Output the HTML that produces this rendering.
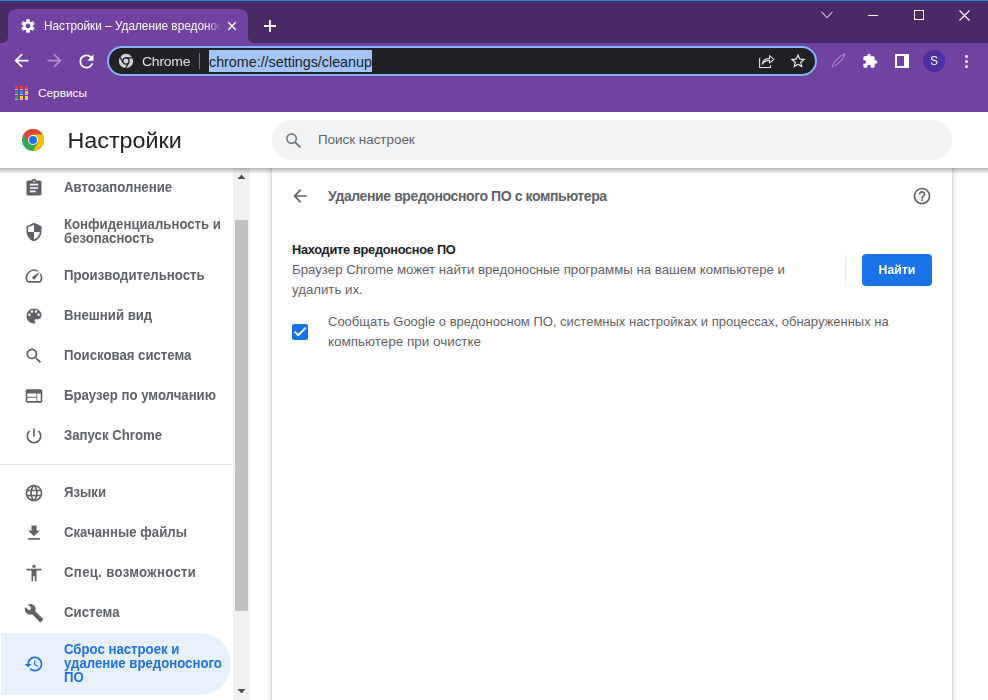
<!DOCTYPE html>
<html><head><meta charset="utf-8"><style>
*{margin:0;padding:0;box-sizing:border-box}
html,body{width:988px;height:700px;overflow:hidden;background:#fff;font-family:"Liberation Sans",sans-serif}
.a,.t,.i{position:absolute}
.t{white-space:nowrap}
</style></head><body>
<div class="a" style="left:0;top:0;width:988px;height:43px;background:#482a67"></div>
<div class="a" style="left:0;top:0;width:988px;height:1px;background:#1a8ae6"></div>
<div class="a" style="left:0;top:1px;width:988px;height:1px;background:#4e2a62"></div>
<div class="a" style="left:8px;top:9px;width:240px;height:34px;background:#7042a1;border-radius:8px 8px 0 0"></div>
<div class="a" style="left:2px;top:37px;width:6px;height:6px;background:#7042a1"><div style="width:6px;height:6px;background:#482a67;border-bottom-right-radius:6px"></div></div>
<div class="a" style="left:248px;top:37px;width:6px;height:6px;background:#7042a1"><div style="width:6px;height:6px;background:#482a67;border-bottom-left-radius:6px"></div></div>
<svg class="i" style="left:18px;top:16px" width="20" height="20" viewBox="0 0 20 20"><path fill="#fff" fill-rule="evenodd" d="M11.91 5.71 L11.67 3.30 L8.33 3.30 L8.09 5.71 L7.24 6.20 L5.04 5.21 L3.37 8.10 L5.33 9.51 L5.33 10.49 L3.37 11.90 L5.04 14.79 L7.24 13.80 L8.09 14.29 L8.33 16.70 L11.67 16.70 L11.91 14.29 L12.76 13.80 L14.96 14.79 L16.63 11.90 L14.67 10.49 L14.67 9.51 L16.63 8.10 L14.96 5.21 L12.76 6.20Z M12.4 10 A2.4 2.4 0 1 0 7.6 10 A2.4 2.4 0 1 0 12.4 10Z"/></svg>
<div class="t" style="left:44px;top:18.83px;font-size:11.8px;line-height:14.16px;color:#fff;font-weight:normal;width:177px;overflow:hidden;-webkit-mask-image:linear-gradient(90deg,#000 163px,transparent 177px);transform:scaleY(1.1);transform-origin:0 11.17px">Настройки – Удаление вредоносного ПО</div>
<svg class="i" style="left:227px;top:21px" width="10" height="10" viewBox="0 0 10 10"><path d="M1.3 1.3L8.7 8.7M8.7 1.3L1.3 8.7" stroke="#fff" stroke-width="1.4"/></svg>
<svg class="i" style="left:263px;top:19px" width="14" height="14" viewBox="0 0 14 14"><path d="M7 1V13M1 7H13" stroke="#fff" stroke-width="1.8"/></svg>
<svg class="i" style="left:821px;top:11px" width="12" height="8" viewBox="0 0 12 8"><path d="M0.5 0.8L6 6.8L11.5 0.8" fill="none" stroke="#fff" stroke-width="1"/></svg>
<div class="a" style="left:868px;top:15px;width:10px;height:1px;background:#fff"></div>
<div class="a" style="left:914px;top:10px;width:10px;height:10px;border:1px solid #fff"></div>
<svg class="i" style="left:959px;top:10px" width="11" height="11" viewBox="0 0 11 11"><path d="M0.5 0.5L10.5 10.5M10.5 0.5L0.5 10.5" stroke="#fff" stroke-width="1.1"/></svg>
<div class="a" style="left:0;top:43px;width:988px;height:69px;background:#7042a1"></div>
<svg class="i" style="left:11px;top:50px;" width="21" height="21" viewBox="0 0 24 24"><path fill="#fff" d="M20 11H7.83l5.59-5.59L12 4l-8 8 8 8 1.41-1.41L7.83 13H20v-2z"/></svg>
<svg class="i" style="left:43.5px;top:50px;transform:scaleX(-1)" width="21" height="21" viewBox="0 0 24 24"><path fill="rgba(255,255,255,.42)" d="M20 11H7.83l5.59-5.59L12 4l-8 8 8 8 1.41-1.41L7.83 13H20v-2z"/></svg>
<svg class="i" style="left:75.5px;top:50.5px" width="21" height="21" viewBox="0 0 24 24"><path fill="#fff" d="M17.65 6.35C16.2 4.9 14.21 4 12 4c-4.42 0-7.99 3.58-7.99 8s3.57 8 7.99 8c3.73 0 6.84-2.55 7.73-6h-2.08c-.82 2.33-3.04 4-5.65 4-3.31 0-6-2.69-6-6s2.69-6 6-6c1.66 0 3.14.69 4.22 1.78L13 11h7V4l-2.35 2.35z"/></svg>
<div class="a" style="left:107px;top:46px;width:710px;height:30px;background:#202124;border:2px solid #8ab4f8;border-radius:15px"></div>
<svg class="i" style="left:116px;top:51px" width="20" height="20" viewBox="0 0 20 20"><circle cx="10" cy="10" r="7.2" fill="#cfcfcf"/><circle cx="10" cy="10" r="3.1" fill="#cfcfcf" stroke="#202124" stroke-width="1.2"/><path d="M10 6.8H17.5M12.77 11.6L9.2 17.8M7.23 11.6L3.6 5.4" stroke="#202124" stroke-width="1.2" fill="none"/></svg>
<div class="t" style="left:142px;top:53.25px;font-size:14px;line-height:16.8px;color:#e3e3e3;font-weight:normal;letter-spacing:-0.25px;transform:scaleY(0.96);transform-origin:0 13.25px">Chrome</div>
<div class="a" style="left:199px;top:53px;width:1px;height:16px;background:#6f7276"></div>
<div class="a" style="left:209px;top:50px;width:163px;height:22px;background:#a3c6f7"></div>
<div class="t" style="left:209px;top:53.97px;font-size:14.3px;line-height:17.16px;color:#202124;font-weight:normal;">chrome://settings/cleanup</div>
<svg class="i" style="left:752px;top:48px" width="26" height="26" viewBox="0 0 26 26"><path d="M7.6 10V19.5H18.5V17.2" fill="none" stroke="#e0e0e0" stroke-width="1.1"/><path d="M10.3 16.2C10.6 12.6 13.2 10.6 17.5 10.6V7.6L21.9 11.4L17.5 15V12.4C14.3 12.3 11.9 13.6 10.3 16.2Z" fill="none" stroke="#e0e0e0" stroke-width="1.05" stroke-linejoin="round"/></svg>
<svg class="i" style="left:789px;top:52px" width="18" height="18" viewBox="0 0 24 24"><path fill="#e8eaed" d="M22 9.24l-7.19-.62L12 2 9.19 8.63 2 9.24l5.46 4.73L5.82 21 12 17.27 18.18 21l-1.63-7.03L22 9.24zM12 15.4l-3.76 2.27 1-4.28-3.32-2.88 4.38-.38L12 6.1l1.71 4.04 4.38.38-3.32 2.88 1 4.28L12 15.4z"/></svg>
<svg class="i" style="left:830px;top:52px" width="16" height="16" viewBox="0 0 16 16"><path d="M2 15C3.6 10 8.2 4.8 14.6 1.8C13.8 7 9 11.8 2 15Z" fill="rgba(160,120,215,.35)" stroke="#b99de0" stroke-width="0.9"/><path d="M2.6 14.4L13.2 3.6" stroke="#4a2d72" stroke-width="0.8"/></svg>
<svg class="i" style="left:861.7px;top:53.3px;" width="16" height="16" viewBox="0 0 24 24"><path fill="#fff" d="M20.5 11H19V7c0-1.1-.9-2-2-2h-4V3.5C13 2.12 11.88 1 10.5 1S8 2.12 8 3.5V5H4c-1.1 0-1.99.9-1.99 2v3.8H3.5c1.49 0 2.7 1.21 2.7 2.7s-1.21 2.7-2.7 2.7H2V20c0 1.1.9 2 2 2h3.8v-1.5c0-1.49 1.21-2.7 2.7-2.7 1.49 0 2.7 1.21 2.7 2.7V22H17c1.1 0 2-.9 2-2v-4h1.5c1.38 0 2.5-1.12 2.5-2.5S21.88 11 20.5 11z"/></svg>
<div class="a" style="left:895px;top:54px;width:14px;height:14px;background:#fff"></div>
<div class="a" style="left:897px;top:56px;width:7px;height:10px;background:#7042a1"></div>
<div class="a" style="left:923px;top:50px;width:22px;height:22px;border-radius:50%;background:#4f2fa3"></div>
<div class="t" style="left:923px;top:54.62px;font-size:11.5px;line-height:13.8px;color:#fff;font-weight:normal;width:22px;text-align:center;transform:scaleY(1.1);transform-origin:0 10.88px">S</div>
<div class="a" style="left:964.9px;top:54.8px;width:3.2px;height:3.2px;border-radius:50%;background:#fff"></div>
<div class="a" style="left:964.9px;top:59.9px;width:3.2px;height:3.2px;border-radius:50%;background:#fff"></div>
<div class="a" style="left:964.9px;top:65.0px;width:3.2px;height:3.2px;border-radius:50%;background:#fff"></div>
<div class="a" style="left:15px;top:86px;width:3px;height:3px;background:#f03a24"></div>
<div class="a" style="left:15px;top:89px;width:3px;height:1px;background:#c4b0e0"></div>
<div class="a" style="left:20px;top:86px;width:3px;height:3px;background:#f03a24"></div>
<div class="a" style="left:20px;top:89px;width:3px;height:1px;background:#c4b0e0"></div>
<div class="a" style="left:25px;top:86px;width:3px;height:3px;background:#f03a24"></div>
<div class="a" style="left:25px;top:89px;width:3px;height:1px;background:#c4b0e0"></div>
<div class="a" style="left:15px;top:91px;width:3px;height:3px;background:#1fa33f"></div>
<div class="a" style="left:15px;top:94px;width:3px;height:1px;background:#c4b0e0"></div>
<div class="a" style="left:20px;top:91px;width:3px;height:3px;background:#2196f3"></div>
<div class="a" style="left:20px;top:94px;width:3px;height:1px;background:#c4b0e0"></div>
<div class="a" style="left:25px;top:91px;width:3px;height:3px;background:#f5c400"></div>
<div class="a" style="left:25px;top:94px;width:3px;height:1px;background:#c4b0e0"></div>
<div class="a" style="left:15px;top:96px;width:3px;height:3px;background:#1fa33f"></div>
<div class="a" style="left:15px;top:99px;width:3px;height:1px;background:#c4b0e0"></div>
<div class="a" style="left:20px;top:96px;width:3px;height:3px;background:#ffd000"></div>
<div class="a" style="left:20px;top:99px;width:3px;height:1px;background:#c4b0e0"></div>
<div class="a" style="left:25px;top:96px;width:3px;height:3px;background:#ffd000"></div>
<div class="a" style="left:25px;top:99px;width:3px;height:1px;background:#c4b0e0"></div>
<div class="t" style="left:38px;top:85.83px;font-size:11.8px;line-height:14.16px;color:#fff;font-weight:normal;">Сервисы</div>
<div class="a" style="left:0;top:112px;width:988px;height:56px;background:#fff"></div>
<svg class="i" style="left:21px;top:128px" width="24" height="24" viewBox="0 0 48 48">
<circle cx="24" cy="24" r="22" fill="#34a853"/>
<path d="M24 2A22 22 0 0 1 43.05 13H24z" fill="#ea4335"/>
<path d="M4.95 13A22 22 0 0 1 24 2V13z" fill="#ea4335"/>
<path d="M24 13H43.05A22 22 0 0 1 24 46L33.53 29.5z" fill="#fbbc04"/>
<path d="M4.95 13L14.47 29.5L24 13z" fill="#ea4335"/>
<circle cx="24" cy="24" r="10" fill="#fff"/><circle cx="24" cy="24" r="8" fill="#1a73e8"/></svg>
<div class="t" style="left:67.5px;top:126.75px;font-size:23.3px;line-height:27.96px;color:#202124;font-weight:normal;;transform:scaleY(0.935);transform-origin:0 22.05px">Настройки</div>
<div class="a" style="left:272px;top:120px;width:680px;height:40px;border-radius:20px;background:#f1f3f4"></div>
<svg class="i" style="left:280px;top:128px" width="24" height="24" viewBox="0 0 24 24"><circle cx="11.6" cy="10.6" r="4.7" fill="none" stroke="#74787c" stroke-width="1.6"/><path d="M15 14L20.6 19.6" stroke="#74787c" stroke-width="1.9"/></svg>
<div class="t" style="left:318px;top:132.12px;font-size:13.4px;line-height:16.08px;color:#5f6368;font-weight:normal;">Поиск настроек</div>
<div class="a" style="left:1px;top:633px;width:230px;height:62px;background:#e8f0fe;border-radius:0 31px 31px 0"></div>
<svg class="i" style="left:24px;top:177.5px;" width="20" height="20" viewBox="0 0 24 24"><path fill="#5f6368" d="M19 3h-4.18C14.4 1.84 13.3 1 12 1c-1.3 0-2.4.84-2.82 2H5c-1.1 0-2 .9-2 2v14c0 1.1.9 2 2 2h14c1.1 0 2-.9 2-2V5c0-1.1-.9-2-2-2zm-7 0c.55 0 1 .45 1 1s-.45 1-1 1-1-.45-1-1 .45-1 1-1zm2 14H7v-2h7v2zm3-4H7v-2h10v2zm0-4H7V7h10v2z"/></svg>
<div class="t" style="left:64px;top:179.51px;font-size:13.2px;line-height:15.84px;color:#5f6368;font-weight:bold;;transform:scaleY(1.08);transform-origin:0 12.49px">Автозаполнение</div>
<svg class="i" style="left:24px;top:221.5px;" width="20" height="20" viewBox="0 0 24 24"><path fill="#5f6368" d="M12 1L3 5v6c0 5.55 3.84 10.74 9 12 5.160-1.26 9-6.45 9-12V5l-9-4zm0 10.99h7c-.53 4.12-3.28 7.79-7 8.94V12H5V6.3l7-3.11v8.8z"/></svg>
<div class="t" style="left:64px;top:216.51px;font-size:13.2px;line-height:15.84px;color:#5f6368;font-weight:bold;;transform:scaleY(1.08);transform-origin:0 12.49px">Конфиденциальность и</div>
<div class="t" style="left:64px;top:230.51px;font-size:13.2px;line-height:15.84px;color:#5f6368;font-weight:bold;;transform:scaleY(1.08);transform-origin:0 12.49px">безопасность</div>
<svg class="i" style="left:24px;top:265.5px;" width="20" height="20" viewBox="0 0 24 24"><path fill="#5f6368" d="M20.38 8.57l-1.23 1.85a8 8 0 0 1-.22 7.58H5.07A8 8 0 0 1 15.58 6.85l1.85-1.23A10 10 0 0 0 3.35 19a2 2 0 0 0 1.72 1h13.85a2 2 0 0 0 1.74-1 10 10 0 0 0-.27-10.44zm-9.79 6.84a2 2 0 0 0 2.830 0l5.66-8.49-8.49 5.66a2 2 0 0 0 0 2.83z"/></svg>
<div class="t" style="left:64px;top:267.51px;font-size:13.2px;line-height:15.84px;color:#5f6368;font-weight:bold;;transform:scaleY(1.08);transform-origin:0 12.49px">Производительность</div>
<svg class="i" style="left:24px;top:305.5px;" width="20" height="20" viewBox="0 0 24 24"><path fill="#5f6368" d="M12 3c-4.97 0-9 4.03-9 9s4.03 9 9 9c.83 0 1.5-.67 1.5-1.5 0-.39-.15-.74-.39-1.01-.23-.26-.38-.61-.38-.99 0-.83.67-1.5 1.5-1.5H16c2.760 0 5-2.24 5-5 0-4.42-4.03-8-9-8zm-5.5 9c-.83 0-1.5-.67-1.5-1.5S5.67 9 6.5 9 8 9.67 8 10.5 7.33 12 6.5 12zm3-4C8.67 8 8 7.33 8 6.5S8.67 5 9.5 5s1.5.67 1.5 1.5S10.33 8 9.5 8zm5 0c-.83 0-1.5-.67-1.5-1.5S13.67 5 14.5 5s1.5.67 1.5 1.5S15.33 8 14.5 8zm3 4c-.83 0-1.5-.67-1.5-1.5S16.67 9 17.5 9s1.5.67 1.5 1.5-.67 1.5-1.5 1.5z"/></svg>
<div class="t" style="left:64px;top:307.51px;font-size:13.2px;line-height:15.84px;color:#5f6368;font-weight:bold;;transform:scaleY(1.08);transform-origin:0 12.49px">Внешний вид</div>
<svg class="i" style="left:24px;top:345.5px;" width="20" height="20" viewBox="0 0 24 24"><path fill="#5f6368" d="M15.5 14h-.79l-.28-.27C15.41 12.59 16 11.11 16 9.5 16 5.910 13.09 3 9.5 3S3 5.91 3 9.5 5.91 16 9.5 16c1.61 0 3.09-.59 4.23-1.57l.27.28v.79l5 4.99L20.49 19l-4.99-5zm-6 0C7.01 14 5 11.99 5 9.5S7.01 5 9.5 5 14 7.01 14 9.5 11.99 14 9.5 14z"/></svg>
<div class="t" style="left:64px;top:347.51px;font-size:13.2px;line-height:15.84px;color:#5f6368;font-weight:bold;;transform:scaleY(1.08);transform-origin:0 12.49px">Поисковая система</div>
<svg class="i" style="left:24px;top:385.5px;" width="20" height="20" viewBox="0 0 24 24"><path fill="#5f6368" d="M20 4H4c-1.1 0-1.99.9-1.99 2L2 18c0 1.1.9 2 2 2h16c1.1 0 2-.9 2-2V6c0-1.1-.9-2-2-2zm-5 14H4v-4h11v4zm0-5H4V9h11v4zm5 5h-4V9h4v9z"/></svg>
<div class="t" style="left:64px;top:387.51px;font-size:13.2px;line-height:15.84px;color:#5f6368;font-weight:bold;;transform:scaleY(1.08);transform-origin:0 12.49px">Браузер по умолчанию</div>
<svg class="i" style="left:24px;top:425.5px;" width="20" height="20" viewBox="0 0 24 24"><path fill="#5f6368" d="M13 3h-2v10h2V3zm4.83 2.17l-1.42 1.42C17.99 7.86 19 9.81 19 12c0 3.87-3.13 7-7 7s-7-3.13-7-7c0-2.19 1.01-4.14 2.58-5.42L6.17 5.17C4.23 6.82 3 9.26 3 12c0 4.97 4.03 9 9 9s9-4.03 9-9c0-2.74-1.23-5.18-3.17-6.83z"/></svg>
<div class="t" style="left:64px;top:427.51px;font-size:13.2px;line-height:15.84px;color:#5f6368;font-weight:bold;;transform:scaleY(1.08);transform-origin:0 12.49px">Запуск Chrome</div>
<svg class="i" style="left:24px;top:482.5px;" width="20" height="20" viewBox="0 0 24 24"><path fill="#5f6368" d="M11.99 2C6.47 2 2 6.48 2 12s4.47 10 9.99 10C17.52 22 22 17.52 22 12S17.52 2 11.99 2zm6.93 6h-2.95c-.32-1.25-.78-2.45-1.38-3.56 1.84.63 3.37 1.91 4.33 3.56zM12 4.04c.83 1.2 1.48 2.53 1.91 3.96h-3.82c.43-1.43 1.08-2.76 1.910-3.96zM4.26 14C4.1 13.36 4 12.69 4 12s.1-1.36.26-2h3.38c-.08.66-.14 1.32-.14 2 0 .68.06 1.34.14 2H4.26zm.82 2h2.95c.32 1.25.78 2.45 1.38 3.56-1.84-.63-3.37-1.9-4.33-3.56zm2.95-8H5.08c.96-1.66 2.49-2.93 4.33-3.56C8.81 5.55 8.35 6.75 8.03 8zM12 19.96c-.83-1.2-1.48-2.53-1.91-3.96h3.82c-.43 1.43-1.08 2.76-1.91 3.96zM14.34 14H9.66c-.09-.66-.16-1.32-.16-2 0-.68.07-1.35.16-2h4.68c.09.65.16 1.32.16 2 0 .68-.07 1.34-.16 2zm.25 5.56c.6-1.11 1.06-2.31 1.38-3.56h2.95c-.96 1.65-2.49 2.93-4.33 3.56zM16.36 14c.08-.66.14-1.32.14-2 0-.68-.06-1.34-.14-2h3.38c.16.64.26 1.31.26 2s-.1 1.36-.26 2h-3.38z"/></svg>
<div class="t" style="left:64px;top:484.51px;font-size:13.2px;line-height:15.84px;color:#5f6368;font-weight:bold;;transform:scaleY(1.08);transform-origin:0 12.49px">Языки</div>
<svg class="i" style="left:24px;top:522.5px;" width="20" height="20" viewBox="0 0 24 24"><path fill="#5f6368" d="M19 9h-4V3H9v6H5l7 7 7-7zM5 18v2h14v-2H5z"/></svg>
<div class="t" style="left:64px;top:524.51px;font-size:13.2px;line-height:15.84px;color:#5f6368;font-weight:bold;;transform:scaleY(1.08);transform-origin:0 12.49px">Скачанные файлы</div>
<svg class="i" style="left:24px;top:562.5px;" width="20" height="20" viewBox="0 0 24 24"><path fill="#5f6368" d="M12 2c1.1 0 2 .9 2 2s-.9 2-2 2-2-.9-2-2 .9-2 2-2zm9 7h-6v13h-2v-6h-2v6H9V9H3V7h18v2z"/></svg>
<div class="t" style="left:64px;top:564.51px;font-size:13.2px;line-height:15.84px;color:#5f6368;font-weight:bold;letter-spacing:0.32px;transform:scaleY(1.08);transform-origin:0 12.49px">Спец. возможности</div>
<svg class="i" style="left:24px;top:602.5px;" width="20" height="20" viewBox="0 0 24 24"><path fill="#5f6368" d="M22.7 19l-9.1-9.1c.9-2.3.4-5-1.5-6.9-2-2-5-2.4-7.4-1.3L9 6 6 9 1.6 4.7C.4 7.1.9 10.1 2.9 12.1c1.9 1.9 4.6 2.4 6.9 1.5l9.1 9.1c.4.4 1 .4 1.4 0l2.3-2.3c.5-.4.5-1.1.1-1.4z"/></svg>
<div class="t" style="left:64px;top:604.51px;font-size:13.2px;line-height:15.84px;color:#5f6368;font-weight:bold;;transform:scaleY(1.08);transform-origin:0 12.49px">Система</div>
<div class="a" style="left:0;top:464px;width:233px;height:1px;background:#e8eaed"></div>
<svg class="i" style="left:24px;top:654px;" width="20" height="20" viewBox="0 0 24 24"><path fill="#1a73e8" d="M13 3c-4.97 0-9 4.03-9 9H1l3.89 3.89.07.14L9 12H6c0-3.87 3.13-7 7-7s7 3.13 7 7-3.13 7-7 7c-1.93 0-3.68-.79-4.94-2.06l-1.42 1.42C8.27 19.99 10.51 21 13 21c4.97 0 9-4.03 9-9s-4.03-9-9-9zm-1 5v5l4.28 2.54.72-1.21-3.5-2.08V8H12z"/></svg>
<div class="t" style="left:64px;top:641.51px;font-size:13.2px;line-height:15.84px;color:#1a73e8;font-weight:bold;;transform:scaleY(1.08);transform-origin:0 12.49px">Сброс настроек и</div>
<div class="t" style="left:64px;top:655.51px;font-size:13.2px;line-height:15.84px;color:#1a73e8;font-weight:bold;;transform:scaleY(1.08);transform-origin:0 12.49px">удаление вредоносного</div>
<div class="t" style="left:64px;top:669.51px;font-size:13.2px;line-height:15.84px;color:#1a73e8;font-weight:bold;;transform:scaleY(1.08);transform-origin:0 12.49px">ПО</div>
<div class="a" style="left:233px;top:168px;width:17px;height:532px;background:#f1f1f1"></div>
<div class="a" style="left:235px;top:220px;width:13px;height:391px;background:#c1c1c1"></div>
<svg class="i" style="left:237px;top:173px" width="9" height="7" viewBox="0 0 9 7"><path d="M0.5 6L4.5 1.5L8.5 6Z" fill="#505050"/></svg>
<svg class="i" style="left:237px;top:688px" width="9" height="7" viewBox="0 0 9 7"><path d="M0.5 1L4.5 5.5L8.5 1Z" fill="#505050"/></svg>
<div class="a" style="left:272px;top:160px;width:680px;height:560px;background:#fff;box-shadow:0 1px 2px rgba(60,64,67,.3),0 2px 6px 2px rgba(60,64,67,.13)"></div>
<div class="a" style="left:250px;top:112px;width:738px;height:56px;background:#fff"></div>
<div class="a" style="left:272px;top:120px;width:680px;height:40px;border-radius:20px;background:#f1f3f4"></div>
<svg class="i" style="left:280px;top:128px" width="24" height="24" viewBox="0 0 24 24"><circle cx="11.6" cy="10.6" r="4.7" fill="none" stroke="#74787c" stroke-width="1.6"/><path d="M15 14L20.6 19.6" stroke="#74787c" stroke-width="1.9"/></svg>
<div class="t" style="left:318px;top:132.12px;font-size:13.4px;line-height:16.08px;color:#5f6368;font-weight:normal;">Поиск настроек</div>
<svg class="i" style="left:290px;top:186px;" width="20" height="20" viewBox="0 0 24 24"><path fill="#5f6368" d="M20 11H7.83l5.59-5.59L12 4l-8 8 8 8 1.41-1.41L7.83 13H20v-2z"/></svg>
<div class="t" style="left:328px;top:187.75px;font-size:14px;line-height:16.8px;color:#5f6368;font-weight:bold;letter-spacing:-0.4px">Удаление вредоносного ПО с компьютера</div>
<svg class="i" style="left:912px;top:185.6px;" width="20" height="20" viewBox="0 0 24 24"><path fill="#5f6368" d="M11 18h2v-2h-2v2zm1-16C6.48 2 2 6.48 2 12s4.48 10 10 10 10-4.48 10-10S17.52 2 12 2zm0 18c-4.41 0-8-3.59-8-8s3.59-8 8-8 8 3.59 8 8-3.59 8-8 8zm0-14c-2.21 0-4 1.79-4 4h2c0-1.1.9-2 2-2s2 .9 2 2c0 2-3 1.75-3 5h2c0-2.25 3-2.5 3-5 0-2.21-1.79-4-4-4z"/></svg>
<div class="t" style="left:292px;top:241.88px;font-size:12.8px;line-height:15.36px;color:#202124;font-weight:bold;letter-spacing:-0.3px">Находите вредоносное ПО</div>
<div class="t" style="left:292px;top:262.47px;font-size:13.24px;line-height:15.89px;color:#5f6368;font-weight:normal;">Браузер Chrome может найти вредоносные программы на вашем компьютере и</div>
<div class="t" style="left:292px;top:282.47px;font-size:13.24px;line-height:15.89px;color:#5f6368;font-weight:normal;">удалить их.</div>
<div class="a" style="left:845px;top:254px;width:1px;height:32px;background:#e8eaed"></div>
<div class="a" style="left:862px;top:254px;width:70px;height:32px;border-radius:4px;background:#1a73e8"></div>
<div class="t" style="left:862px;top:263.36px;font-size:12.3px;line-height:14.76px;color:#fff;font-weight:bold;width:70px;text-align:center;transform:scaleY(1.08);transform-origin:0 11.64px">Найти</div>
<div class="a" style="left:292px;top:324px;width:16px;height:16px;border-radius:2px;background:#1a73e8"></div>
<svg class="i" style="left:292px;top:324px" width="16" height="16" viewBox="0 0 16 16"><path d="M2.6 7.6L6.3 11.2L13.8 3.6" fill="none" stroke="#fff" stroke-width="2"/></svg>
<div class="t" style="left:328px;top:313.70px;font-size:13.0px;line-height:15.6px;color:#5f6368;font-weight:normal;">Сообщать Google о вредоносном ПО, системных настройках и процессах, обнаруженных на</div>
<div class="t" style="left:328px;top:334.28px;font-size:13.44px;line-height:16.13px;color:#5f6368;font-weight:normal;">компьютере при очистке</div>
<div class="a" style="left:0;top:168px;width:988px;height:6px;background:linear-gradient(rgba(0,0,0,.28),rgba(0,0,0,0))"></div>
</body></html>
